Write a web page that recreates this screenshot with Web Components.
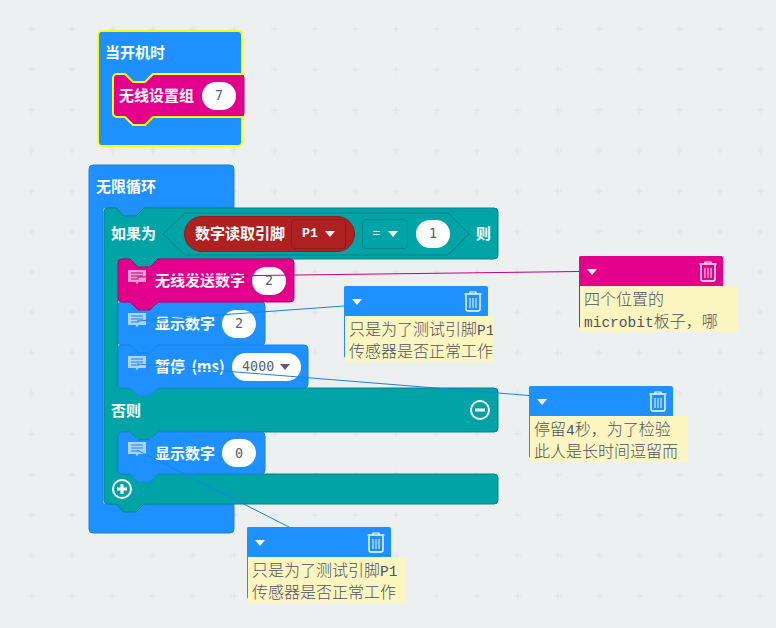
<!DOCTYPE html>
<html>
<head>
<meta charset="utf-8">
<style>
html,body{margin:0;padding:0;background:#ecf0f1;}
</style>
</head>
<body>
<mk-workspace>
  <mk-block x="89" y="165" w="145" h="368" shape="forever" color="#1e90ff" edge="#1b81e5">
    <mk-row h="43" pad="7"><span>无限循环</span></mk-row>
  </mk-block>

  <mk-block x="104" y="208" w="394" h="296" shape="ifelse" color="#00a4a6" edge="#008385">
    <mk-row h="51" pad="7">
      <span>如果为</span>
      <mk-hex w="306" h="42" style="margin-left:7px">
        <mk-reporter>
          <span>数字读取引脚</span>
          <mk-drop w="55" edge="#8f1b1b" color="#fff" mono-weight="700">P1</mk-drop>
        </mk-reporter>
        <mk-drop w="46" edge="#008385" color="#fff">=</mk-drop>
        <mk-pill w="34" style="margin-left:1px">1</mk-pill>
      </mk-hex>
      <span style="margin-left:7px">则</span>
    </mk-row>
    <mk-row h="129"></mk-row>
    <mk-row h="44" pad="7" split>
      <span>否则</span>
      <mk-round kind="minus"></mk-round>
    </mk-row>
    <mk-row h="42"></mk-row>
    <mk-row h="30" pad="8"><mk-round kind="plus"></mk-round></mk-row>
  </mk-block>

  <mk-block x="118" y="345" w="190" h="43" shape="stack" color="#1e90ff" edge="#1b81e5">
    <mk-row h="43" pad="10"><mk-bubble line="#1b81e5"></mk-bubble><span style="margin-left:9px;word-spacing:3px">暂停 (ms)</span><mk-pill w="69" caret style="margin-left:7px">4000</mk-pill></mk-row>
  </mk-block>
  <mk-block x="118" y="302" w="147" h="43" shape="stack" color="#1e90ff" edge="#1b81e5">
    <mk-row h="43" pad="10"><mk-bubble line="#1b81e5"></mk-bubble><span style="margin-left:9px">显示数字</span><mk-pill w="34" style="margin-left:7px">2</mk-pill></mk-row>
  </mk-block>
  <mk-block x="118" y="259" w="176" h="43" shape="stack" color="#e3008c" edge="#b60070">
    <mk-row h="43" pad="10"><mk-bubble line="#b60070"></mk-bubble><span style="margin-left:9px">无线发送数字</span><mk-pill w="34" style="margin-left:7px">2</mk-pill></mk-row>
  </mk-block>
  <mk-block x="118" y="432" w="147" h="42" shape="stack" color="#1e90ff" edge="#1b81e5">
    <mk-row h="42" pad="10"><mk-bubble line="#1b81e5"></mk-bubble><span style="margin-left:9px">显示数字</span><mk-pill w="34" style="margin-left:7px">0</mk-pill></mk-row>
  </mk-block>

  <mk-block x="98" y="31" w="144" h="115" shape="hat" color="#1e90ff" edge="#1e90ff">
    <mk-row h="43" pad="7"><span>当开机时</span></mk-row>
  </mk-block>
  <mk-block x="113" y="74" w="131" h="43" shape="stack" color="#e3008c" edge="#b60070">
    <mk-row h="43" pad="6"><span>无线设置组</span><mk-pill w="34" style="margin-left:8px">7</mk-pill></mk-row>
  </mk-block>
  <mk-block x="98" y="31" w="144" h="115" shape="hat" color="none" edge="#ffff00" thick="2"></mk-block>

  <mk-link x1="137" y1="277" x2="579" y2="271.5" color="#c4007c"></mk-link>
  <mk-link x1="137" y1="321" x2="344" y2="306" color="#1b81e5"></mk-link>
  <mk-link x1="137" y1="364" x2="529" y2="395.5" color="#1b81e5"></mk-link>
  <mk-link x1="137" y1="450" x2="291" y2="528" color="#1b81e5"></mk-link>

  <mk-comment x="344" y="286" tw="148" color="#1e90ff">只是为了测试引脚<i>P1</i><br>传感器是否正常工作</mk-comment>
  <mk-comment x="579" y="256" tw="158" color="#e3008c">四个位置的<br><i>microbit</i>板子，哪</mk-comment>
  <mk-comment x="529" y="386" tw="158" color="#1e90ff">停留<i>4</i>秒，为了检验<br>此人是长时间逗留而</mk-comment>
  <mk-comment x="247" y="527" tw="158" color="#1e90ff">只是为了测试引脚<i>P1</i><br>传感器是否正常工作</mk-comment>
</mk-workspace>

<script>
// path builders, all relative to the top left of the block
function stackPath(w,h){
  return `M0,4 a4,4 0 0 1 4,-4 h8 l8,8 h12 l8,-8 H${w-4} a4,4 0 0 1 4,4 V${h-4} a4,4 0 0 1 -4,4 H40 l-8,8 h-12 l-8,-8 H4 a4,4 0 0 1 -4,-4 Z`;
}
function foreverPath(w,h){
  return `M0,4 a4,4 0 0 1 4,-4 H${w-4} a4,4 0 0 1 4,4 V43 H55 l-8,8 h-12 l-8,-8 H14 V339 H${w} V${h-4} a4,4 0 0 1 -4,4 H4 a4,4 0 0 1 -4,-4 Z`;
}
function hatPath(w,h){
  return `M0,4 a4,4 0 0 1 4,-4 H${w-4} a4,4 0 0 1 4,4 V43 H55 l-8,8 h-12 l-8,-8 H19 a4,4 0 0 0 -4,4 V82 a4,4 0 0 0 4,4 H27 l8,8 h12 l8,-8 H${w} V${h-4} a4,4 0 0 1 -4,4 H4 a4,4 0 0 1 -4,-4 Z`;
}
function ifelsePath(w,h){
  return `M0,4 a4,4 0 0 1 4,-4 h8 l8,8 h12 l8,-8 H${w-4} a4,4 0 0 1 4,4 V47 a4,4 0 0 1 -4,4 H54 l-8,8 h-12 l-8,-8 H18 a4,4 0 0 0 -4,4 V176 a4,4 0 0 0 4,4 H${w-4} a4,4 0 0 1 4,4 V220 a4,4 0 0 1 -4,4 H54 l-8,8 h-12 l-8,-8 H18 a4,4 0 0 0 -4,4 V262 a4,4 0 0 0 4,4 H${w-4} a4,4 0 0 1 4,4 V${h-4} a4,4 0 0 1 -4,4 H40 l-8,8 h-12 l-8,-8 H4 a4,4 0 0 1 -4,-4 Z`;
}
const Shapes = {stack:stackPath,forever:foreverPath,hat:hatPath,ifelse:ifelsePath};

class MkWorkspace extends HTMLElement{
  constructor(){
    super();
    this.attachShadow({mode:'open'}).innerHTML = `
    <style>
    :host{display:block;position:relative;width:776px;height:628px;overflow:hidden;background:#ecf0f1;}
    svg{position:absolute;left:0;top:0;}
    </style>
    <svg width="776" height="628">
      <defs>
        <pattern id="dots" x="-9" y="-11.5" width="40.5" height="40.5" patternUnits="userSpaceOnUse">
          <path d="M37,40.5 h7 M40.5,37 v7 M-3.5,40.5 h7 M0,37 v7 M37,0 h7 M40.5,-3.5 v7 M-3.5,0 h7 M0,-3.5 v7" stroke="#dde2e4" stroke-width="1" fill="none"/>
        </pattern>
      </defs>
      <rect width="776" height="628" fill="url(#dots)"/>
    </svg>
    <slot></slot>`;
  }
}

class MkBlock extends HTMLElement{
  constructor(){
    super();
    this.attachShadow({mode:'open'});
  }
  connectedCallback(){
    const w = +this.getAttribute('w'), h = +this.getAttribute('h');
    const d = Shapes[this.getAttribute('shape')](w,h);
    const thick = this.getAttribute('thick') || 1;
    this.shadowRoot.innerHTML = `
    <style>
    :host{display:block;position:absolute;left:${this.getAttribute('x')}px;top:${this.getAttribute('y')}px;width:${w}px;height:${h}px;
      font:700 15px "Noto Sans CJK SC","Liberation Sans",sans-serif;color:#fff;}
    svg{position:absolute;left:0;top:0;overflow:visible;}
    .body{position:relative;display:flex;flex-direction:column;}
    </style>
    <svg width="${w}" height="${h}"><path d="${d}" fill="${this.getAttribute('color')}" stroke="${this.getAttribute('edge')}" stroke-width="${thick}"/></svg>
    <div class="body"><slot></slot></div>`;
  }
}

class MkRow extends HTMLElement{
  constructor(){
    super();
    this.attachShadow({mode:'open'}).innerHTML = `
    <style>
    :host{display:flex;align-items:center;white-space:nowrap;}
    :host([split]){justify-content:space-between;}
    ::slotted(span){padding-bottom:2px;}
    </style><slot></slot>`;
  }
  connectedCallback(){
    this.style.height = this.getAttribute('h')+'px';
    this.style.paddingLeft = (this.getAttribute('pad')||0)+'px';
    if(this.hasAttribute('split')) this.style.paddingRight = '8px';
  }
}

class MkHex extends HTMLElement{
  constructor(){
    super();
    this.attachShadow({mode:'open'});
  }
  connectedCallback(){
    const w = +this.getAttribute('w'), h = +this.getAttribute('h');
    this.shadowRoot.innerHTML = `
    <style>
    :host{display:flex;align-items:center;gap:7px;position:relative;box-sizing:border-box;width:${w}px;height:${h}px;padding-left:21px;}
    svg{position:absolute;left:0;top:0;overflow:visible;}
    ::slotted(*){position:relative;}
    </style>
    <svg width="${w}" height="${h}"><path d="M0,${h/2} L22,0 H${w-21} L${w},${h/2} L${w-21},${h} H22 Z" fill="#00a4a6" stroke="#008385"/></svg>
    <slot></slot>`;
  }
}

class MkReporter extends HTMLElement{
  constructor(){
    super();
    this.attachShadow({mode:'open'}).innerHTML = `
    <style>
    :host{display:flex;align-items:center;gap:6px;box-sizing:border-box;width:171px;height:36px;padding-left:10px;
      background:#af2020;border:1px solid #8f1b1b;border-radius:18px;}
    ::slotted(span){padding-bottom:2px;}
    </style><slot></slot>`;
  }
}

const caret = c => `<svg width="10" height="6" viewBox="0 0 10 6"><path d="M0,0 H10 L5,6 Z" fill="${c}"/></svg>`;

class MkDrop extends HTMLElement{
  constructor(){
    super();
    this.attachShadow({mode:'open'});
  }
  connectedCallback(){
    this.shadowRoot.innerHTML = `
    <style>
    :host{display:flex;align-items:center;justify-content:center;gap:7px;box-sizing:border-box;width:${this.getAttribute('w')}px;height:30px;
      border:1px solid ${this.getAttribute('edge')};border-radius:4px;
      font:${this.getAttribute('mono-weight')||400} 13.33px "Liberation Mono",monospace;color:${this.getAttribute('color')};}
    </style><slot></slot>${caret('#fff')}`;
  }
}

class MkPill extends HTMLElement{
  constructor(){
    super();
    this.attachShadow({mode:'open'});
  }
  connectedCallback(){
    this.shadowRoot.innerHTML = `
    <style>
    :host{display:flex;align-items:center;justify-content:center;gap:6px;box-sizing:border-box;width:${this.getAttribute('w')}px;height:28px;flex:none;
      background:#fff;border-radius:14px;
      font:400 13.33px "DejaVu Sans Mono","Liberation Mono",monospace;color:#575e75;}
    </style><slot></slot>${this.hasAttribute('caret')?caret('#575e75'):''}`;
  }
}

class MkBubble extends HTMLElement{
  constructor(){
    super();
    this.attachShadow({mode:'open'});
  }
  connectedCallback(){
    const c = this.getAttribute('line');
    this.shadowRoot.innerHTML = `
    <style>:host{display:block;flex:none;width:18px;height:16px;margin-top:-8px;}</style>
    <svg width="18" height="16" viewBox="0 0 18 16">
      <path d="M0,0 H18 V12 H10.5 L9,14.5 L7.5,12 H0 Z" fill="#fff" fill-opacity=".62"/>
      <path d="M3,3 H15 M3,6 H15 M3,9 H11" stroke="${c}" stroke-width="1.2" fill="none"/>
    </svg>`;
  }
}

class MkRound extends HTMLElement{
  constructor(){
    super();
    this.attachShadow({mode:'open'});
  }
  connectedCallback(){
    const bar = this.getAttribute('kind')=='plus' ? 'M5,10 H15 M10,5 V15' : 'M5,10 H15';
    this.shadowRoot.innerHTML = `
    <style>:host{display:block;width:20px;height:20px;flex:none;}</style>
    <svg width="20" height="20" viewBox="0 0 20 20">
      <circle cx="10" cy="10" r="9" fill="none" stroke="#fff" stroke-width="2"/>
      <path d="${bar}" stroke="#fff" stroke-width="3" fill="none"/>
    </svg>`;
  }
}

class MkLink extends HTMLElement{
  constructor(){
    super();
    this.attachShadow({mode:'open'});
  }
  connectedCallback(){
    const a = n => this.getAttribute(n);
    this.shadowRoot.innerHTML = `
    <style>:host{display:block;position:absolute;left:0;top:0;}svg{display:block;}</style>
    <svg width="776" height="628"><line x1="${a('x1')}" y1="${a('y1')}" x2="${a('x2')}" y2="${a('y2')}" stroke="${a('color')}" stroke-width="1"/></svg>`;
  }
}

const trash = `<svg width="18" height="21" viewBox="0 0 18 21" fill="none" stroke="#fff">
  <path d="M6,3 V1 H12 V3" stroke-width="1.2"/>
  <path d="M0.5,3 H17.5" stroke-width="1.4"/>
  <path d="M2,4 V18 a2,2 0 0 0 2,2 H14 a2,2 0 0 0 2,-2 V4" stroke-width="1.4"/>
  <path d="M6,7 V17 M9,7 V17 M12,7 V17" stroke-width="1.3" stroke-opacity=".75"/>
</svg>`;

class MkComment extends HTMLElement{
  constructor(){
    super();
    this.attachShadow({mode:'open'});
  }
  connectedCallback(){
    const c = this.getAttribute('color');
    this.shadowRoot.innerHTML = `
    <style>
    :host{display:block;position:absolute;left:${this.getAttribute('x')}px;top:${this.getAttribute('y')}px;width:144px;height:72px;
      box-sizing:border-box;border-left:1px solid ${c};border-radius:2px;}
    .head{display:flex;align-items:center;justify-content:space-between;box-sizing:border-box;height:30px;margin-left:-1px;padding:0 6px 0 8px;
      background:${c};border-radius:2px 2px 0 0;}
    .head svg:first-child{margin-top:2px;}
    .text{box-sizing:border-box;width:${this.getAttribute('tw')}px;height:46px;padding:1px 4px;overflow:hidden;background:#fbf5bf;color:#4d5368;
      font:300 16px/22px "Noto Sans CJK SC",sans-serif;white-space:nowrap;}
    ::slotted(i){font:400 14.5px/1 "Liberation Mono",monospace;}
    </style>
    <div class="head">${caret('#fff')}${trash}</div>
    <div class="text"><slot></slot></div>`;
  }
}

customElements.define('mk-workspace',MkWorkspace);
customElements.define('mk-block',MkBlock);
customElements.define('mk-row',MkRow);
customElements.define('mk-hex',MkHex);
customElements.define('mk-reporter',MkReporter);
customElements.define('mk-drop',MkDrop);
customElements.define('mk-pill',MkPill);
customElements.define('mk-bubble',MkBubble);
customElements.define('mk-round',MkRound);
customElements.define('mk-link',MkLink);
customElements.define('mk-comment',MkComment);
</script>
</body>
</html>
